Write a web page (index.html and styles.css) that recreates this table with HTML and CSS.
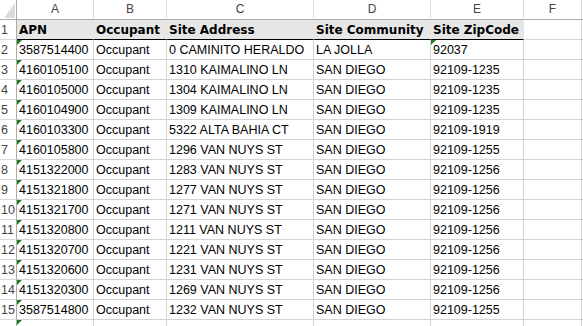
FILE: index.html
```html
<!DOCTYPE html>
<html>
<head>
<meta charset="utf-8">
<link rel="stylesheet" href="styles.css">
</head>
<body>
<div class="sheet">
  <div class="corner"><span class="corner-tri"></span></div>
  <div class="colhdr">A</div><div class="colhdr">B</div><div class="colhdr">C</div><div class="colhdr">D</div><div class="colhdr">E</div><div class="colhdr">F</div><div class="colhdr"></div>

  <div class="rowhdr">1</div>
  <div class="cell head">APN</div><div class="cell head">Occupant</div><div class="cell head">Site Address</div><div class="cell head">Site Community</div><div class="cell head">Site ZipCode</div><div class="cell"></div><div class="cell"></div>

  <div class="rowhdr">2</div>
  <div class="cell flag">3587514400</div><div class="cell">Occupant</div><div class="cell">0 CAMINITO HERALDO</div><div class="cell">LA JOLLA</div><div class="cell flag">92037</div><div class="cell"></div><div class="cell"></div>

  <div class="rowhdr">3</div>
  <div class="cell flag">4160105100</div><div class="cell">Occupant</div><div class="cell">1310 KAIMALINO LN</div><div class="cell">SAN DIEGO</div><div class="cell">92109-1235</div><div class="cell"></div><div class="cell"></div>

  <div class="rowhdr">4</div>
  <div class="cell flag">4160105000</div><div class="cell">Occupant</div><div class="cell">1304 KAIMALINO LN</div><div class="cell">SAN DIEGO</div><div class="cell">92109-1235</div><div class="cell"></div><div class="cell"></div>

  <div class="rowhdr">5</div>
  <div class="cell flag">4160104900</div><div class="cell">Occupant</div><div class="cell">1309 KAIMALINO LN</div><div class="cell">SAN DIEGO</div><div class="cell">92109-1235</div><div class="cell"></div><div class="cell"></div>

  <div class="rowhdr">6</div>
  <div class="cell flag">4160103300</div><div class="cell">Occupant</div><div class="cell">5322 ALTA BAHIA CT</div><div class="cell">SAN DIEGO</div><div class="cell">92109-1919</div><div class="cell"></div><div class="cell"></div>

  <div class="rowhdr">7</div>
  <div class="cell flag">4160105800</div><div class="cell">Occupant</div><div class="cell">1296 VAN NUYS ST</div><div class="cell">SAN DIEGO</div><div class="cell">92109-1255</div><div class="cell"></div><div class="cell"></div>

  <div class="rowhdr">8</div>
  <div class="cell flag">4151322000</div><div class="cell">Occupant</div><div class="cell">1283 VAN NUYS ST</div><div class="cell">SAN DIEGO</div><div class="cell">92109-1256</div><div class="cell"></div><div class="cell"></div>

  <div class="rowhdr">9</div>
  <div class="cell flag">4151321800</div><div class="cell">Occupant</div><div class="cell">1277 VAN NUYS ST</div><div class="cell">SAN DIEGO</div><div class="cell">92109-1256</div><div class="cell"></div><div class="cell"></div>

  <div class="rowhdr">10</div>
  <div class="cell flag">4151321700</div><div class="cell">Occupant</div><div class="cell">1271 VAN NUYS ST</div><div class="cell">SAN DIEGO</div><div class="cell">92109-1256</div><div class="cell"></div><div class="cell"></div>

  <div class="rowhdr">11</div>
  <div class="cell flag">4151320800</div><div class="cell">Occupant</div><div class="cell">1211 VAN NUYS ST</div><div class="cell">SAN DIEGO</div><div class="cell">92109-1256</div><div class="cell"></div><div class="cell"></div>

  <div class="rowhdr">12</div>
  <div class="cell flag">4151320700</div><div class="cell">Occupant</div><div class="cell">1221 VAN NUYS ST</div><div class="cell">SAN DIEGO</div><div class="cell">92109-1256</div><div class="cell"></div><div class="cell"></div>

  <div class="rowhdr">13</div>
  <div class="cell flag">4151320600</div><div class="cell">Occupant</div><div class="cell">1231 VAN NUYS ST</div><div class="cell">SAN DIEGO</div><div class="cell">92109-1256</div><div class="cell"></div><div class="cell"></div>

  <div class="rowhdr">14</div>
  <div class="cell flag">4151320300</div><div class="cell">Occupant</div><div class="cell">1269 VAN NUYS ST</div><div class="cell">SAN DIEGO</div><div class="cell">92109-1256</div><div class="cell"></div><div class="cell"></div>

  <div class="rowhdr">15</div>
  <div class="cell flag">3587514800</div><div class="cell">Occupant</div><div class="cell">1232 VAN NUYS ST</div><div class="cell">SAN DIEGO</div><div class="cell">92109-1255</div><div class="cell"></div><div class="cell"></div>

  <div class="rowhdr"></div>
  <div class="cell flag"></div><div class="cell"></div><div class="cell"></div><div class="cell"></div><div class="cell"></div><div class="cell"></div><div class="cell"></div>
</div>
</body>
</html>
```

FILE: styles.css
```css
html, body {
  margin: 0;
  padding: 0;
  background: #ffffff;
  overflow: hidden;
}

.sheet {
  display: grid;
  grid-template-columns: 17px 77px 73px 147px 117px 93px 58px 1fr;
  grid-auto-rows: 20px;
  width: 583px;
  font-family: "Liberation Sans", Arial, sans-serif;
  font-size: 12.5px;
  color: #000;
}

.sheet > div {
  box-sizing: border-box;
  border-right: 1px solid #d4d4d4;
  border-bottom: 1px solid #d4d4d4;
  white-space: nowrap;
  overflow: hidden;
}

.corner {
  position: relative;
  border-right-color: #ababab !important;
  border-bottom-color: #ababab !important;
}

.corner-tri {
  position: absolute;
  left: 4px;
  top: 3px;
  width: 11px;
  height: 15px;
  background: #dcdcdc;
  clip-path: polygon(100% 0, 100% 100%, 0 100%);
}

.colhdr {
  text-align: center;
  color: #444;
  font-size: 12px;
  line-height: 19px;
  border-bottom-color: #ababab !important;
  border-right-color: #dadada !important;
}

.rowhdr {
  color: #444;
  font-size: 12.5px;
  line-height: 19px;
  padding: 1px 0 0 1px;
  border-right-color: #ababab !important;
  border-bottom-color: #dadada !important;
}

.cell {
  position: relative;
  padding: 1px 2px 0 2px;
  line-height: 19px;
}

.head {
  background: #e7e6e6;
  font-family: "DejaVu Sans", Verdana, sans-serif;
  font-weight: bold;
  font-size: 12px;
  border-right-color: #e7e6e6 !important;
  border-bottom-color: #000 !important;
}

.flag::before {
  content: "";
  position: absolute;
  left: 0;
  top: 0;
  width: 0;
  height: 0;
  border-top: 5px solid #1e7b1e;
  border-right: 5px solid transparent;
}
```
